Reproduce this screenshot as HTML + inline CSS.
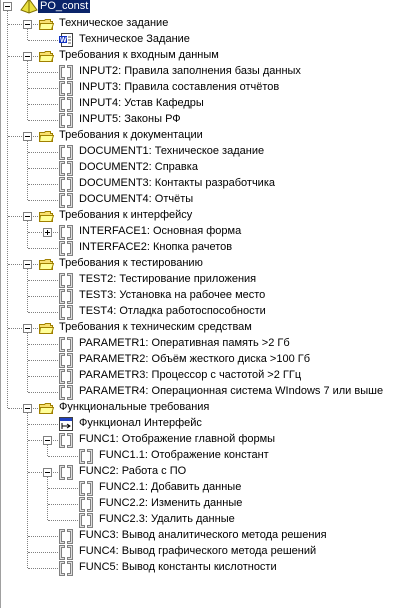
<!DOCTYPE html><html><head><meta charset="utf-8"><style>
body{margin:0;width:402px;height:608px;background:#fff;position:relative;overflow:hidden;font-family:Tahoma,"Liberation Sans","DejaVu Sans",sans-serif;font-size:11px;color:#000}
.t{position:absolute;white-space:nowrap;line-height:13px;height:13px}
.v{position:absolute;width:0;border-left:1px dotted #808080}
.h{position:absolute;height:0;border-top:1px dotted #808080}
.b{position:absolute;width:7px;height:7px;border:1px solid #808080;background:#fff}
.b:before{content:"";position:absolute;left:1px;top:3px;width:5px;height:1px;background:#000}
.p:after{content:"";position:absolute;left:3px;top:1px;width:1px;height:5px;background:#000}
svg{position:absolute}
</style></head><body>
<div style="position:absolute;left:0;top:0;width:1px;height:608px;background:#a0a0a0"></div>
<svg width="0" height="0"><defs>
<g id="br"><path d="M1.5 1.5h5v2h-3v10h3v2h-5z M14.5 1.5h-5v2h3v10h-3v2h5z" fill="#e0e0e0" stroke="#808080"/></g>
<g id="fd"><path d="M1.5 4.5h5l1-1h5v2h2v8h-13z" fill="#f8e070" stroke="#a08000"/><path d="M2.5 7.5h13l-2 6h-12z" fill="#ffff99" stroke="#a08000"/></g>
</defs></svg>
<div id="c"></div>
<script>
var rows=[
[0,'m','root','PO_const'],
[1,'m','fd','Техническое задание'],
[2,'','w','Техническое Задание'],
[1,'m','fd','Требования к входным данным'],
[2,'','br','INPUT2: Правила заполнения базы данных'],
[2,'','br','INPUT3: Правила составления отчётов'],
[2,'','br','INPUT4: Устав Кафедры'],
[2,'','br','INPUT5: Законы РФ'],
[1,'m','fd','Требования к документации'],
[2,'','br','DOCUMENT1: Техническое задание'],
[2,'','br','DOCUMENT2: Справка'],
[2,'','br','DOCUMENT3: Контакты разработчика'],
[2,'','br','DOCUMENT4: Отчёты'],
[1,'m','fd','Требования к интерфейсу'],
[2,'p','br','INTERFACE1: Основная форма'],
[2,'','br','INTERFACE2: Кнопка рачетов'],
[1,'m','fd','Требования к тестированию'],
[2,'','br','TEST2: Тестирование приложения'],
[2,'','br','TEST3: Установка на рабочее место'],
[2,'','br','TEST4: Отладка работоспособности'],
[1,'m','fd','Требования к техническим средствам'],
[2,'','br','PARAMETR1: Оперативная память >2 Гб'],
[2,'','br','PARAMETR2: Объём жесткого диска >100 Гб'],
[2,'','br','PARAMETR3: Процессор с частотой >2 ГГц'],
[2,'','br','PARAMETR4: Операционная система WIndows 7 или выше'],
[1,'m','fd','Функциональные требования'],
[2,'','fi','Функционал Интерфейс'],
[2,'m','br','FUNC1: Отображение главной формы'],
[3,'','br','FUNC1.1: Отображение констант'],
[2,'m','br','FUNC2: Работа с ПО'],
[3,'','br','FUNC2.1: Добавить данные'],
[3,'','br','FUNC2.2: Изменить данные'],
[3,'','br','FUNC2.3: Удалить данные'],
[2,'','br','FUNC3: Вывод аналитического метода решения'],
[2,'','br','FUNC4: Вывод графического метода решений'],
[2,'','br','FUNC5: Вывод константы кислотности']];
var h='';function cy(i){return i==0?6:16*i+8;}
for(var i=0;i<rows.length;i++){var L=rows[i][0];var last=-1;
 for(var j=i+1;j<rows.length&&rows[j][0]>L;j++)if(rows[j][0]==L+1)last=j;
 if(last>0&&rows[i][1]=='m'){var x=7+20*L;h+='<div class="v" style="left:'+x+'px;top:'+(cy(i)+5)+'px;height:'+(cy(last)-cy(i)-5)+'px"></div>';}}
for(var i=0;i<rows.length;i++){var r=rows[i],L=r[0],y=cy(i);
 if(L>0){var x0=7+20*(L-1);h+='<div class="h" style="left:'+(x0+1)+'px;top:'+y+'px;width:'+(18+20*L-x0-1)+'px"></div>';}
 if(r[1]){var bx=3+20*L;h+='<div class="b '+(r[1]=='p'?'p':'')+'" style="left:'+bx+'px;top:'+(y-4)+'px"></div>';}
 var ix=18+20*L,iy=y-8;
 if(r[2]=='br'||r[2]=='fd')h+='<svg width="16" height="17" style="left:'+ix+'px;top:'+iy+'px"><use href="#'+r[2]+'"/></svg>';
 else if(r[2]=='root')h+='<svg width="18" height="16" style="left:20px;top:'+(iy)+'px"><path d="M9 1L1 12l8 3 8-3z" fill="#e8e040" stroke="#807000"/><path d="M9 1v14" stroke="#807000"/></svg>';
 else if(r[2]=='w')h+='<svg width="16" height="16" style="left:'+ix+'px;top:'+iy+'px"><rect x="3.5" y="1.5" width="11" height="13" fill="#fff" stroke="#404040"/><rect x="1" y="4" width="8" height="7" fill="#1030c0"/><text x="2" y="10" font-size="7" fill="#fff" font-family="Liberation Sans" font-weight="bold">W</text><path d="M10 5h3M10 8h3M10 11h3" stroke="#606060"/></svg>';
 else h+='<svg width="16" height="16" style="left:'+ix+'px;top:'+iy+'px"><rect x="1.5" y="1.5" width="13" height="13" fill="#fff" stroke="#404040"/><rect x="2" y="2" width="12" height="3" fill="#2040c0"/><path d="M4 7v6M4 10h8M9 8l3 2-3 2" stroke="#000" fill="none"/></svg>';
 var tx=39+20*L;
 if(L==0)h+='<div class="t" style="left:38px;top:'+(y-7)+'px;background:#0a246a;color:#fff;padding:0 2px;height:14px;line-height:14px">'+r[3]+'</div>';
 else h+='<div class="t" style="left:'+tx+'px;top:'+(y-7)+'px">'+r[3]+'</div>';}
document.getElementById('c').innerHTML=h;
</script>
</body></html>
